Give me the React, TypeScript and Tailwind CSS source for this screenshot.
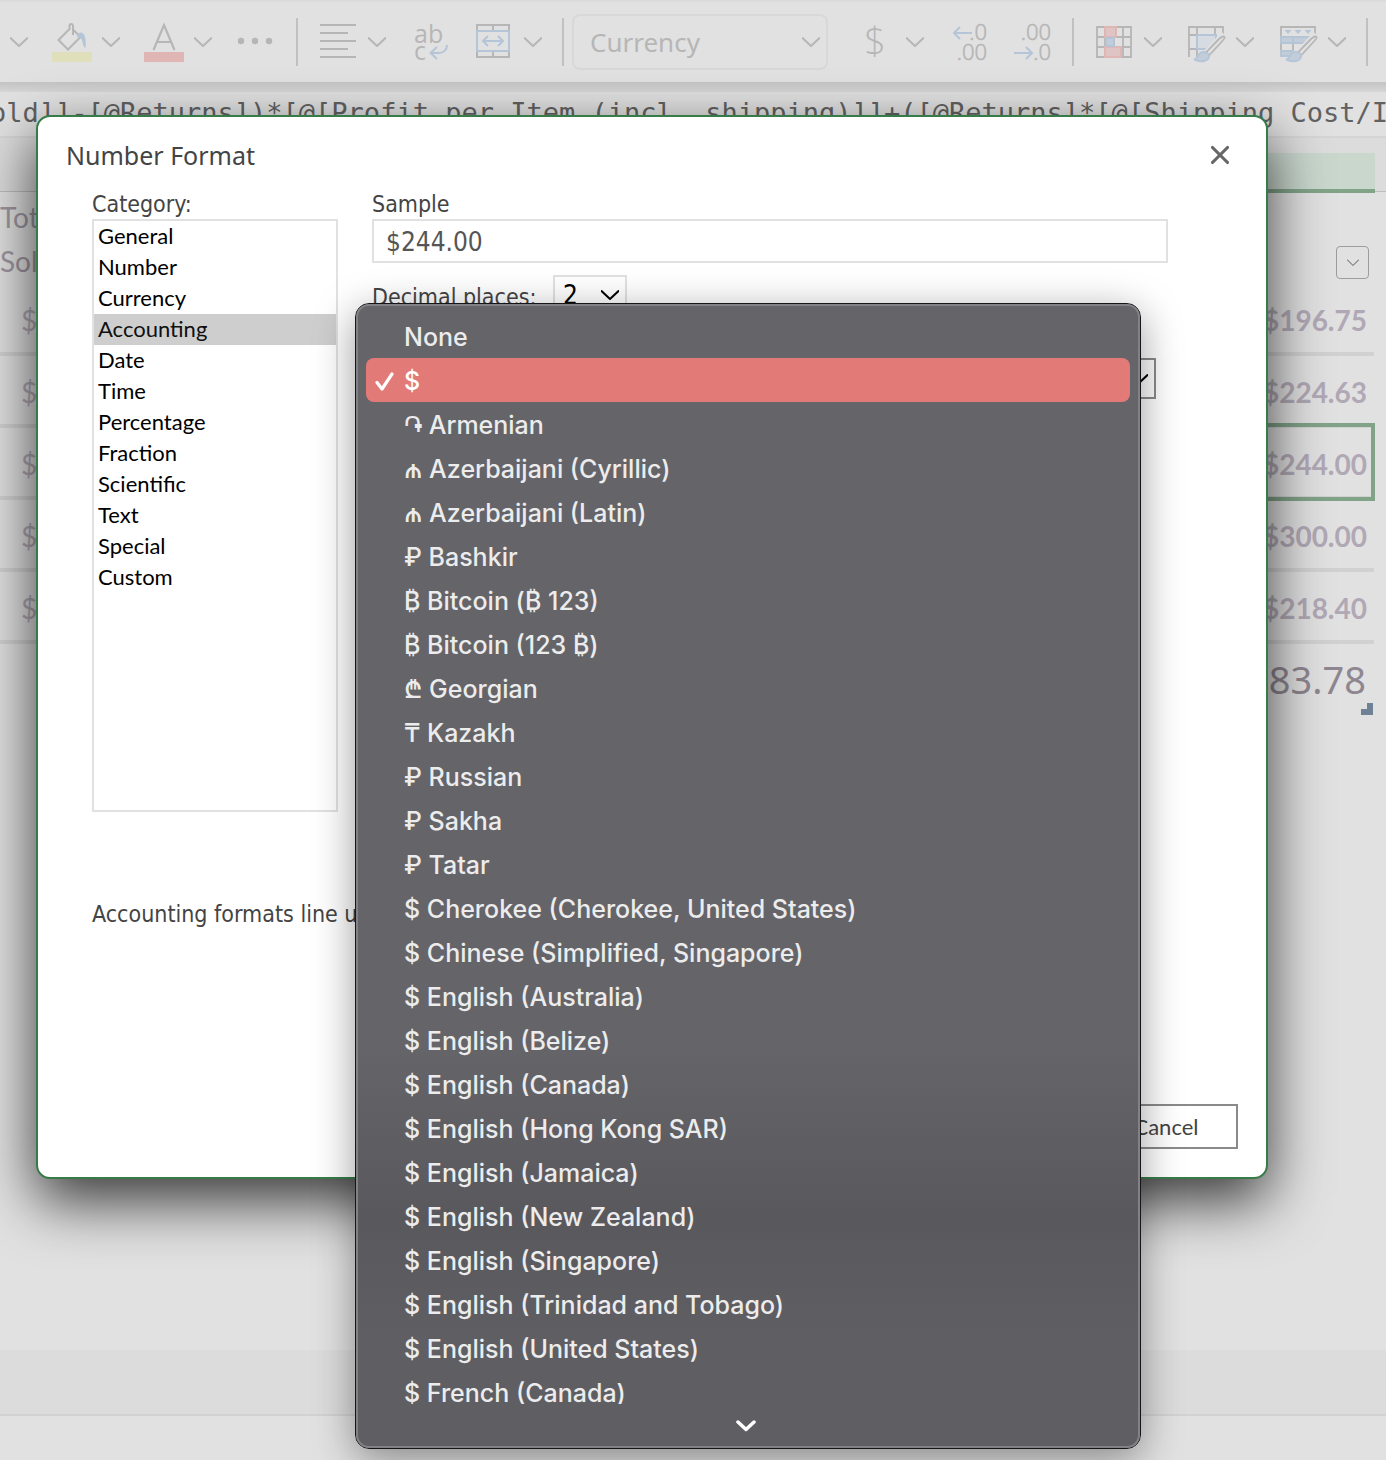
import React, { useState } from 'react';
import { X } from 'lucide-react';

const GREY = '#b6b6b6';
const BLUE = '#b4c5d8';
const RED = '#dfb6b4';

const categories = [
  'General',
  'Number',
  'Currency',
  'Accounting',
  'Date',
  'Time',
  'Percentage',
  'Fraction',
  'Scientific',
  'Text',
  'Special',
  'Custom'
];

const symbols = [
  'None',
  '$',
  '֏ Armenian',
  '₼ Azerbaijani (Cyrillic)',
  '₼ Azerbaijani (Latin)',
  '₽ Bashkir',
  '₿ Bitcoin (₿ 123)',
  '₿ Bitcoin (123 ₿)',
  '₾ Georgian',
  '₸ Kazakh',
  '₽ Russian',
  '₽ Sakha',
  '₽ Tatar',
  '$ Cherokee (Cherokee, United States)',
  '$ Chinese (Simplified, Singapore)',
  '$ English (Australia)',
  '$ English (Belize)',
  '$ English (Canada)',
  '$ English (Hong Kong SAR)',
  '$ English (Jamaica)',
  '$ English (New Zealand)',
  '$ English (Singapore)',
  '$ English (Trinidad and Tobago)',
  '$ English (United States)',
  '$ French (Canada)'
];

const profits = ['$196.75', '$224.63', '$244.00', '$300.00', '$218.40'];
const selectedRow = 2;

const Chevron: React.FC<{ className?: string }> = ({ className = 'text-[#b6b6b6]' }) => (
  <svg width="18" height="10" viewBox="0 0 18 10" fill="none" stroke="currentColor" strokeWidth="2" className={`shrink-0 ${className}`}>
    <path d="M0 0.5 9 9l9-8.5" />
  </svg>
);

const Icon: React.FC<{ children: React.ReactNode }> = ({ children }) => (
  <svg width="40" height="40" viewBox="0 0 40 40" fill="none" stroke={GREY} strokeWidth="2" className="shrink-0 overflow-visible font-['Open_Sans',sans-serif]">
    {children}
  </svg>
);

const ToolButton: React.FC<{ label: string; children: React.ReactNode }> = ({ label, children }) => (
  <button type="button" aria-label={label} className="flex shrink-0 items-center gap-[10px]">
    {children}
    <Chevron />
  </button>
);

const Separator = () => <span className="mx-5 h-12 w-0.5 shrink-0 bg-[#c1c1c1]" />;

// Brush shared by the table and cell style icons
const Brush = () => (
  <>
    <path d="M39 13 21 32" stroke="#e1e1e1" strokeWidth="9" />
    <path d="M38.5 15c-1.500-1.500-4 .5-7 3.500L20 30.500l3 3L34.500 21c3-3.500 5-5 4-6z" strokeWidth="1.800" />
    <path d="M8 37.500c4 0 3-5 7-7 4-1.500 9 1 8 4.500-1.500 5-9 5.500-15 2.500z" fill="#c3ccd9" stroke={BLUE} strokeWidth="1.800" />
  </>
);

const Toolbar = () => (
  <div className="flex h-[82px] shrink-0 items-center overflow-hidden border-t-2 border-[#dbdbdb] bg-[#e1e1e1] pl-[10px]">
    <div className="flex shrink-0 items-center gap-6">
      <button type="button" aria-label="Borders">
        <Chevron />
      </button>
      <ToolButton label="Fill color">
        <Icon>
          <rect x="0" y="30" width="40" height="10" fill="#dfdfbc" stroke="none" />
          <path d="M17 7.500 6.500 18 16 27.500 28.500 15 21.500 8" />
          <path d="M17.500 8V3.500a1.800 1.800 0 0 1 3.500 0V13" />
          <path d="M25 12c5-4 10-1 8.500 14-2-1-2.500-3-3-6-.5-3-2-5-5.500-5z" fill={BLUE} stroke="none" />
        </Icon>
      </ToolButton>
      <ToolButton label="Font color">
        <Icon>
          <rect x="0" y="30" width="40" height="10" fill={RED} stroke="none" />
          <path d="M9.500 28 20 3l10.500 25M13 20h14" strokeWidth="2.200" />
        </Icon>
      </ToolButton>
      <button type="button" aria-label="More font options">
        <Icon>
          <g fill={GREY} stroke="none">
            <circle cx="5" cy="19" r="3.200" />
            <circle cx="19" cy="19" r="3.200" />
            <circle cx="33" cy="19" r="3.200" />
          </g>
        </Icon>
      </button>
    </div>
    <Separator />
    <div className="flex shrink-0 items-center gap-7">
      <ToolButton label="Alignment">
        <Icon>
          <path d="M2 3h36M2 11h28M2 19h36M2 27h28M2 35h36" />
        </Icon>
      </ToolButton>
      <button type="button" aria-label="Wrap text" className="w-8">
        <Icon>
          <text fontSize="25" fill={GREY} stroke="none">
            <tspan x="0" y="21">ab</tspan>
            <tspan x="0" y="38">c</tspan>
          </text>
          <path d="M33 23c0 5-4 8-8 8h-8M23 25l-6.500 6 6.500 6" stroke={BLUE} />
        </Icon>
      </button>
      <ToolButton label="Merge cells">
        <Icon>
          <path d="M3 9V3h32v6M3 29v6h32v-6M19 3v6M19 29v6" />
          <path d="M3 9h32v20H3zM9 19h20M14 14l-5 5 5 5M24 14l5 5-5 5" stroke={BLUE} />
        </Icon>
      </ToolButton>
    </div>
    <span className="mr-2 ml-5 h-12 w-0.5 shrink-0 bg-[#c1c1c1]" />
    <button
      type="button"
      aria-label="Number format"
      className="flex h-14 w-64 shrink-0 items-center justify-between rounded-lg border-2 border-[#d8d8d8] pr-[6px] pl-4 font-['Noto_Sans',sans-serif] text-[26px] text-[#b6b6b6]"
    >
      Currency
      <Chevron />
    </button>
    <div className="ml-7 flex shrink-0 items-center gap-6">
      <ToolButton label="Accounting format">
        <Icon>
          <text x="19" y="33" fontSize="38" fontWeight="300" textAnchor="middle" fill={GREY} stroke="none">$</text>
        </Icon>
      </ToolButton>
      <button type="button" aria-label="Increase decimal">
        <Icon>
          <text x="39" y="18" fontSize="22" fontWeight="300" textAnchor="end" fill={GREY} stroke={GREY} strokeWidth="0.6">.0</text>
          <text x="39" y="38" fontSize="22" fontWeight="300" textAnchor="end" fill={GREY} stroke={GREY} strokeWidth="0.6">.00</text>
          <path d="M24 11H6M12 5l-6 6 6 6" stroke={BLUE} />
        </Icon>
      </button>
      <button type="button" aria-label="Decrease decimal">
        <Icon>
          <text x="39" y="18" fontSize="22" fontWeight="300" textAnchor="end" fill={GREY} stroke={GREY} strokeWidth="0.6">.00</text>
          <text x="39" y="38" fontSize="22" fontWeight="300" textAnchor="end" fill={GREY} stroke={GREY} strokeWidth="0.6">.0</text>
          <path d="M2 31h18M14 25l6 6-6 6" stroke={BLUE} />
        </Icon>
      </button>
    </div>
    <Separator />
    <div className="flex shrink-0 items-center gap-6">
      <ToolButton label="Conditional formatting">
        <Icon>
          <path d="M3 5h34v30H3zM11 5v30M29 5v30M3 15h34M3 25h34" strokeWidth="1.800" />
          <path d="M11 5h11v10H11zM11 25h16v10H11z" fill="#dec5c4" stroke={RED} />
          <path d="M12 16h8v8h-8z" fill="#c3ccd9" stroke={BLUE} />
        </Icon>
      </ToolButton>
      <ToolButton label="Format as table">
        <Icon>
          <path d="M3 35V5h34v8M11 5v30M29 5v8M3 13h8M3 27h8" strokeWidth="1.800" />
          <path d="M11 13h19v14H11z" fill="#d6dbe1" stroke={BLUE} />
          <Brush />
        </Icon>
      </ToolButton>
      <ToolButton label="Cell styles">
        <Icon>
          <path d="M3 35V5h34v8M15 21v8" strokeWidth="1.800" />
          <path d="M6.500 8h7L10 12zM16.500 8h7L20 12zM26.500 8h7L30 12z" fill={BLUE} stroke="none" />
          <path d="M3 15h28v6H3zM15 15v6" fill="#c3ccd9" stroke={BLUE} />
          <path d="M3 29h11v5H3z" fill="#c3ccd9" stroke={BLUE} />
          <Brush />
        </Icon>
      </ToolButton>
    </div>
    <Separator />
  </div>
);

const Sheet = () => (
  <main className="flex-1 bg-[#e1e1e1]">
    <div className="flex h-[54px] items-end justify-end border-b border-[#bdbdbd] bg-[#dcdcdc] pr-[11px]">
      <div className="-mb-0.5 h-10 w-40 border-b-4 border-[#81a388] bg-[#c9d7cd]" />
    </div>
    <table className="w-full border-separate border-spacing-0 pr-3 font-['Lato',sans-serif] text-[28px]">
      <thead>
        <tr className="h-[92px]">
          <th className="p-0 pt-0.5 text-left leading-[44px] font-normal text-[#9d96a0]">
            Total
            <br />
            Sold
          </th>
          <th className="p-0 pr-[5px] text-right align-bottom">
            <button type="button" aria-label="Filter" className="mb-[5px] inline-flex h-[33px] w-[33px] items-center justify-center rounded-sm border border-[#9d9d9d]">
              <svg width="12" height="7" viewBox="0 0 12 7" fill="none" stroke="#555555">
                <path d="m0 .5 6 6 6-6" />
              </svg>
            </button>
          </th>
        </tr>
      </thead>
      <tbody>
        {profits.map((value, index) => (
          <tr key={value} className="h-[72px]">
            <td className="border-b-4 border-[#d1d1d1] p-0 pt-[3px] pl-[21px] text-[#b1a8b5]">$</td>
            <td className="relative border-b-4 border-[#d1d1d1] p-0 pt-[3px] pr-[7px] text-right font-bold text-[#b1a8b5]">
              {value}
              {index === selectedRow && (
                <span className="absolute -top-[5px] -right-px -bottom-[5px] left-0 border-4 border-[#81a388]" />
              )}
            </td>
          </tr>
        ))}
      </tbody>
      <tfoot className="font-['Noto_Sans',sans-serif] text-[38px] text-[#8e8690]">
        <tr className="h-[72px]">
          <td className="p-0" />
          <td className="relative p-0 pr-2 pb-0.5 text-right">
            $1,183.78
            <svg width="12" height="12" className="absolute right-px bottom-px" fill="#6f8295">
              <path d="M6 0h6v12H0V6h6z" />
            </svg>
          </td>
        </tr>
      </tfoot>
    </table>
  </main>
);

interface SymbolMenuProps {
  value: string;
  onSelect: (value: string) => void;
}

const SymbolMenu: React.FC<SymbolMenuProps> = ({ value, onSelect }) => (
  <div className="absolute -top-[55px] right-[27px] -left-[17px] z-10 rounded-[14px] border border-[#161618] bg-linear-to-b from-[#656468] from-65% via-[#59585c] via-80% to-[#5f5e62] to-90% shadow-[0_10px_40px_rgba(0,0,0,0.4)]">
    <div className="rounded-[13px] border-2 border-[#828186] px-2 pt-2">
      <ul role="listbox" aria-label="Symbol" className="h-[1090px] overflow-hidden font-['Inter',sans-serif] text-[25px] font-medium text-[#ececed]">
        {symbols.map((symbol) => (
          <li
            key={symbol}
            role="option"
            aria-selected={symbol === value}
            onClick={() => onSelect(symbol)}
            className={`flex h-11 items-center rounded-lg pt-0.5 ${symbol === value ? 'bg-[#e27a77] text-white' : ''}`}
          >
            <span className="flex w-[38px] shrink-0 items-center pl-[9px]">
              {symbol === value && (
                <svg width="19" height="19" viewBox="0 0 19 19" fill="none" stroke="currentColor" strokeWidth="3.200" strokeLinecap="round" strokeLinejoin="round">
                  <path d="M2 10.500 7 17 17 2" />
                </svg>
              )}
            </span>
            <span className="whitespace-nowrap">{symbol}</span>
          </li>
        ))}
      </ul>
      <div className="flex h-[42px] items-center justify-center pt-0.5 pr-1 text-white">
        <svg width="20" height="12" viewBox="0 0 20 12" fill="none" stroke="currentColor" strokeWidth="3.500" strokeLinecap="round" strokeLinejoin="round">
          <path d="m2 2 8 7.500L18 2" />
        </svg>
      </div>
    </div>
  </div>
);

const NumberFormatDialog = () => {
  const [category, setCategory] = useState<string>('Accounting');
  const [decimals, setDecimals] = useState<string>('2');
  const [symbol, setSymbol] = useState<string>('$');

  return (
    <div
      role="dialog"
      aria-labelledby="dialog-title"
      className="rounded-[14px] border-2 border-[#377c48] bg-white pb-7 font-['DejaVu_Sans_Condensed','DejaVu_Sans',sans-serif] text-[23px] leading-[30px] text-[#444] shadow-[0_22px_58px_rgba(0,0,0,0.75)]"
    >
      <div className="flex items-center justify-between pt-[19px] pr-[30px] pl-7">
        <h1 id="dialog-title" className="font-['Noto_Sans',sans-serif] text-[25px] leading-[38px]">Number Format</h1>
        <button type="button" aria-label="Close" className="flex h-8 w-8 items-center justify-center text-[#666]">
          <X size={30} strokeWidth={2.5} />
        </button>
      </div>

      <div className="mt-[15px] flex gap-[34px] pr-[98px] pl-[54px]">
        <div className="flex w-[246px] shrink-0 flex-col">
          <label htmlFor="category">Category:</label>
          <select
            id="category"
            size={12}
            value={category}
            onChange={(e) => setCategory(e.target.value)}
            className="h-[593px] overflow-hidden border-2 border-[#e1e1e1] font-['Lato',sans-serif] text-[22px] text-black outline-none"
          >
            {categories.map((name) => (
              <option key={name} value={name} className="h-[31px] px-1 pt-px pb-0 leading-[31px]">
                {name}
              </option>
            ))}
          </select>
        </div>

        <div className="flex min-w-0 flex-1 flex-col">
          <label htmlFor="sample">Sample</label>
          <input id="sample" readOnly value="$244.00" className="h-11 border-2 border-[#e1e1e1] px-3 pt-0.5 text-[26px] text-[#555] outline-none" />
          <div className="mt-3 flex items-center">
            <label htmlFor="decimals" className="w-[181px] pt-1">Decimal places:</label>
            <span className="relative flex items-center">
              <select
                id="decimals"
                value={decimals}
                onChange={(e) => setDecimals(e.target.value)}
                className="h-10 w-[74px] appearance-none border-2 border-[#e1e1e1] px-2 text-[26px] text-black outline-none"
              >
                {['0', '1', '2', '3', '4'].map((n) => (
                  <option key={n}>{n}</option>
                ))}
              </select>
              <Chevron className="pointer-events-none absolute right-2 text-black" />
            </span>
          </div>
          <div className="relative mt-[43px] flex items-center pr-3">
            <label htmlFor="symbol" className="w-[104px]">Symbol:</label>
            <span className="relative flex flex-1 items-center">
              <select
                id="symbol"
                value={symbol}
                onChange={(e) => setSymbol(e.target.value)}
                className="h-[41px] w-full appearance-none border-2 border-[#8a8a8a] px-2 text-black outline-none"
              >
                {symbols.map((name) => (
                  <option key={name}>{name}</option>
                ))}
              </select>
              <Chevron className="pointer-events-none absolute right-2 text-black" />
            </span>
            <SymbolMenu value={symbol} onSelect={setSymbol} />
          </div>
        </div>
      </div>

      <p className="mt-[87px] pl-[54px]">
        Accounting formats line up the currency symbols and decimal points in a column.
      </p>

      <div className="mt-[175px] flex justify-end gap-4 pr-7 font-['Lato',sans-serif] text-[22px]">
        <button type="button" className="h-[45px] w-36 border-2 border-[#8a8a8a]">OK</button>
        <button type="button" className="h-[45px] w-36 border-2 border-[#8a8a8a]">Cancel</button>
      </div>
    </div>
  );
};

const App: React.FC = () => (
  <div className="relative flex min-h-screen flex-col overflow-hidden bg-[#e1e1e1]">
    <Toolbar />
    <div className="h-[10px] shrink-0 bg-linear-to-b from-[#c4c4c4] to-[#d6d6d6]" />
    <div className="h-[46px] shrink-0 overflow-hidden border-b-2 border-[#d5d5d5]">
      <p className="-ml-[10px] font-['DejaVu_Sans_Mono',monospace] text-[27px] leading-[42px] whitespace-nowrap text-[#616161]">
        old]]-[@Returns])*[@[Profit per Item (incl. shipping)]]+([@Returns]*[@[Shipping Cost/Item]])
      </p>
    </div>
    <Sheet />
    <footer className="shrink-0">
      <div className="h-[66px] border-b-2 border-[#d2d2d2] bg-[#dcdcdc]" />
      <div className="h-11" />
    </footer>

    <div className="absolute inset-x-0 top-[115px] pr-[118px] pl-9">
      <NumberFormatDialog />
    </div>
  </div>
);

export default App;
